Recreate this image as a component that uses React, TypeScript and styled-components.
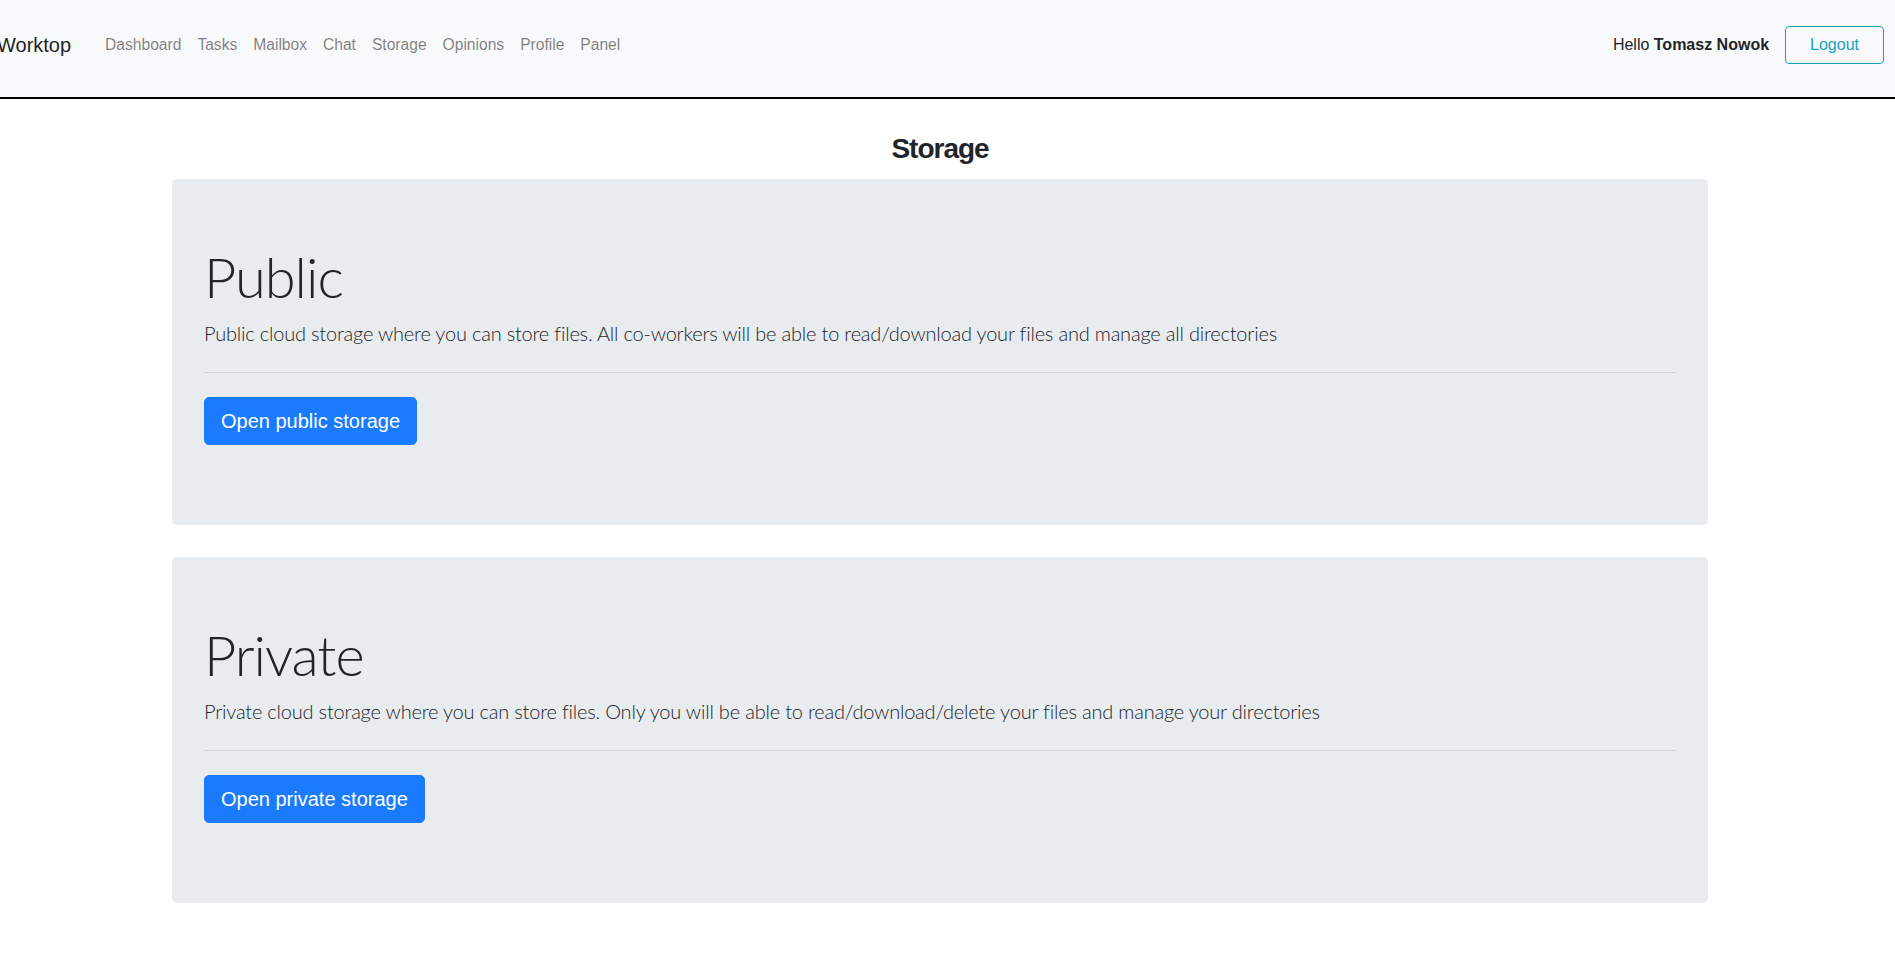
import React from "react";
import styled, { createGlobalStyle } from "styled-components";

const GlobalStyle = createGlobalStyle`
  html, body {
    margin: 0;
    padding: 0;
    background: #ffffff;
    color: #212529;
    font-family: "Liberation Sans", Arial, sans-serif;
    font-size: 16px;
    overflow-x: hidden;
  }
  * { box-sizing: border-box; }
`;

const Navbar = styled.nav`
  display: flex;
  align-items: center;
  height: 99px;
  padding: 0 11px 7px 0;
  background: #f8f9fa;
  border-bottom: 2px solid #000000;
`;

const Brand = styled.a`
  font-size: 20px;
  line-height: 30px;
  color: rgba(0, 0, 0, 0.9);
  margin-left: -3px;
  margin-right: 26px;
  text-decoration: none;
  white-space: nowrap;
`;

const NavList = styled.ul`
  display: flex;
  list-style: none;
  margin: 0;
  padding: 0;
`;

const NavLink = styled.a`
  display: block;
  padding: 8px 8px;
  font-size: 15.6px;
  line-height: 24px;
  color: rgba(0, 0, 0, 0.5);
  text-decoration: none;
`;

const Spacer = styled.div`
  flex: 1;
`;

const Greeting = styled.span`
  font-size: 16px;
  color: #212529;
  margin-right: 16px;
  & strong {
    font-weight: 700;
  }
`;

const OutlineButton = styled.button`
  font-family: inherit;
  font-size: 16px;
  line-height: 24px;
  height: 38px;
  padding: 6px 24px;
  color: #17a2b8;
  background: transparent;
  border: 1px solid #17a2b8;
  border-radius: 4px;
  cursor: pointer;
`;

const Main = styled.main`
  width: 1536px;
  margin: 0 0 0 172px;
  padding-bottom: 40px;
`;

const PageTitle = styled.h3`
  margin: 33px 0 13px;
  font-size: 28px;
  line-height: 1.2;
  font-weight: 700;
  letter-spacing: -1px;
  text-align: center;
`;

const Jumbotron = styled.section`
  background: #e9ecef;
  border-radius: 5px;
  padding: 64px 32px;
  margin-bottom: 32px;
`;

const DisplayTitle = styled.h1`
  margin: 0 0 8px;
  font-family: Lato, "Liberation Sans", sans-serif;
  font-weight: 300;
  font-size: 56px;
  line-height: 1.2;
  letter-spacing: -1px;
  color: #212529;
`;

const Lead = styled.p`
  margin: 0 0 16px;
  font-family: Lato, "Liberation Sans", sans-serif;
  font-weight: 300;
  font-size: 20px;
  line-height: 1.5;
  letter-spacing: -0.2px;
  color: #212529;
`;

const Divider = styled.hr`
  margin: 24px 0;
  border: 0;
  border-top: 1px solid rgba(0, 0, 0, 0.1);
`;

const ActionRow = styled.p`
  margin: 0 0 16px;
  line-height: 30px;
`;

const PrimaryButton = styled.a`
  display: inline-block;
  font-size: 20px;
  line-height: 30px;
  padding: 8px 16px;
  color: #ffffff;
  background: #1a7bff;
  border: 1px solid #1a7bff;
  border-radius: 5px;
  text-decoration: none;
  vertical-align: middle;
`;

const links = ["Dashboard", "Tasks", "Mailbox", "Chat", "Storage", "Opinions", "Profile", "Panel"];

const storages = [
  {
    title: "Public",
    text: "Public cloud storage where you can store files. All co-workers will be able to read/download your files and manage all directories",
    action: "Open public storage",
  },
  {
    title: "Private",
    text: "Private cloud storage where you can store files. Only you will be able to read/download/delete your files and manage your directories",
    action: "Open private storage",
  },
];

export default function App() {
  return (
    <>
      <GlobalStyle />
      <Navbar>
        <Brand href="#">Worktop</Brand>
        <NavList>
          {links.map((l) => (
            <li key={l}>
              <NavLink href="#">{l}</NavLink>
            </li>
          ))}
        </NavList>
        <Spacer />
        <Greeting>
          Hello <strong>Tomasz Nowok</strong>
        </Greeting>
        <OutlineButton>Logout</OutlineButton>
      </Navbar>
      <Main>
        <PageTitle>Storage</PageTitle>
        {storages.map((s) => (
          <Jumbotron key={s.title}>
            <DisplayTitle>{s.title}</DisplayTitle>
            <Lead>{s.text}</Lead>
            <Divider />
            <ActionRow>
              <PrimaryButton href="#">{s.action}</PrimaryButton>
            </ActionRow>
          </Jumbotron>
        ))}
      </Main>
    </>
  );
}
